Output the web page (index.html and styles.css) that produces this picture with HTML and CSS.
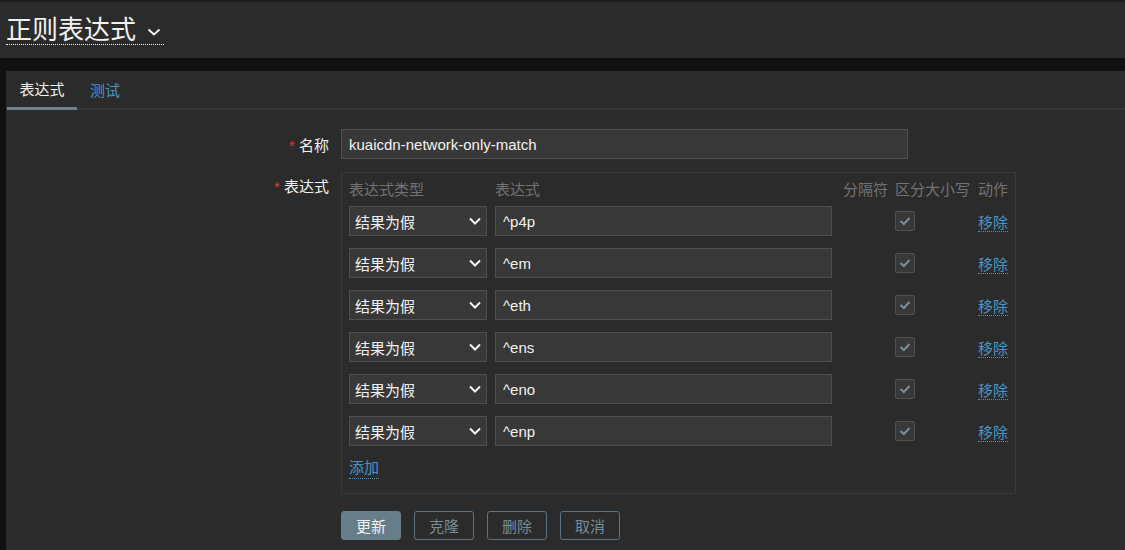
FILE: index.html
```html
<!DOCTYPE html>
<html>
<head lang="zh">
    <meta charset="UTF-8">
    <title>正则表达式</title>
    <link rel="stylesheet" href="styles.css">
</head>
<body>
<div class="header">
    <h1 class="title">正则表达式 <svg class="title-arrow" width="14" height="10" viewBox="0 0 14 10"><path d="M1.5 2.5 L7 7.5 L12.5 2.5" fill="none" stroke="#f2f2f2" stroke-width="2"/></svg></h1>
</div>
<div class="wrapper">
    <ul class="tabs">
        <li class="active"><a href="#">表达式</a></li>
        <li><a href="#">测试</a></li>
    </ul>
    <div class="form">
        <div class="form-row">
            <label class="form-label"><span class="req">*</span> 名称</label>
            <div class="form-field">
                <input class="text-input name-input" type="text" value="kuaicdn-network-only-match">
            </div>
        </div>
        <div class="form-row">
            <label class="form-label label-top"><span class="req">*</span> 表达式</label>
            <div class="form-field">
                <div class="expr-box">
                    <div class="expr-grid" id="exprs">
                        <div class="th">表达式类型</div>
                        <div class="th">表达式</div>
                        <div class="th">分隔符</div>
                        <div class="th">区分大小写</div>
                        <div class="th">动作</div>
                    </div>
                    <a href="#" class="link add-link">添加</a>
                </div>
            </div>
        </div>
        <div class="buttons">
            <button class="btn btn-main">更新</button>
            <button class="btn btn-alt">克隆</button>
            <button class="btn btn-alt">删除</button>
            <button class="btn btn-alt">取消</button>
        </div>
    </div>
</div>
<script>
    //表达式列表
    var exprs = ["^p4p", "^em", "^eth", "^ens", "^eno", "^enp"];
    var grid = document.getElementById("exprs");
    for (var i = 0; i < exprs.length; i++) {
        grid.insertAdjacentHTML("beforeend",
            '<div class="select">结果为假<svg width="14" height="10" viewBox="0 0 14 10"><path d="M2 2.5 L7 7.5 L12 2.5" fill="none" stroke="#f2f2f2" stroke-width="2"/></svg></div>' +
            '<input class="text-input" type="text" value="' + exprs[i] + '">' +
            '<div></div>' +
            '<div><span class="checkbox"><svg width="12" height="10" viewBox="0 0 12 10"><path d="M1.5 5 L4.8 8 L10.5 2" fill="none" stroke="#7b8f9c" stroke-width="2"/></svg></span></div>' +
            '<div><a href="#" class="link">移除</a></div>');
    }
</script>
</body>
</html>
```

FILE: styles.css
```css
* {
    margin: 0;
    padding: 0;
    box-sizing: border-box;
}

ul {
    list-style: none;
}

body {
    background-color: #0e1012;
    color: #f2f2f2;
    font-family: "Liberation Sans", Arial, "Noto Sans CJK SC", sans-serif;
    font-size: 15px;
    width: 1125px;
    height: 550px;
    overflow: hidden;
}

.header {
    height: 58px;
    background-color: #2b2b2b;
    border-top: 2px solid #1c1c1c;
    padding: 14px 0 0 6px;
}

.title {
    display: inline-block;
    font-weight: normal;
    font-size: 26px;
    line-height: 28px;
    border-bottom: 1px dotted #f2f2f2;
    padding-right: 3px;
}

.title-arrow {
    margin-left: 4px;
    vertical-align: 2px;
}

.wrapper {
    margin: 13px 0 0 6px;
    background-color: #2b2b2b;
    height: 500px;
}

.tabs {
    display: flex;
    height: 39px;
    border-bottom: 2px solid #383838;
    padding-left: 1px;
}

.tabs li {
    width: 70px;
    text-align: center;
    line-height: 39px;
}

.tabs li a {
    color: #4796c4;
    text-decoration: none;
}

.tabs li.active {
    border-bottom: 3px solid #6d818f;
    height: 39px;
    line-height: 38px;
}

.tabs li.active a {
    color: #f2f2f2;
}

.tabs li + li {
    width: 56px;
}

.form {
    padding-top: 19px;
}

.form-row {
    display: grid;
    grid-template-columns: 323px 1fr;
    column-gap: 12px;
    margin-bottom: 13px;
    align-items: center;
}

.form-label {
    text-align: right;
}

.label-top {
    align-self: start;
    padding-top: 3px;
}

.req {
    color: #e33734;
}

.text-input {
    height: 30px;
    background-color: #383838;
    border: 1px solid #4f4f4f;
    color: #f2f2f2;
    font: 15px "Liberation Sans", Arial, "Noto Sans CJK SC", sans-serif;
    padding: 0 7px;
    outline: none;
}

.name-input {
    width: 567px;
}

.expr-box {
    width: 675px;
    border: 1px solid #383838;
    padding: 0 7px 14px;
}

.expr-grid {
    display: grid;
    grid-template-columns: 138px 337px 47px 75px 30px;
    column-gap: 8px;
    row-gap: 12px;
    align-items: center;
}

.th {
    color: #737373;
    height: 33px;
    line-height: 33px;
    margin-bottom: -12px;
    white-space: nowrap;
}

.th:nth-child(3) {
    padding-left: 3px;
}

.select {
    height: 30px;
    background-color: #383838;
    border: 1px solid #4f4f4f;
    padding: 0 4px 0 5px;
    display: flex;
    align-items: center;
    justify-content: space-between;
}

.checkbox {
    display: flex;
    width: 20px;
    height: 20px;
    border: 1px solid #505050;
    border-radius: 2px;
    background-color: #383838;
    align-items: center;
    justify-content: center;
}

.link {
    color: #4796c4;
    text-decoration: none;
    border-bottom: 1px dotted #4796c4;
}

.add-link {
    display: inline-block;
    margin-top: 12px;
    line-height: 20px;
}

.buttons {
    display: flex;
    gap: 13px;
    padding: 4px 0 0 335px;
}

.btn {
    width: 60px;
    height: 29px;
    border-radius: 3px;
    font: 15px "Liberation Sans", Arial, "Noto Sans CJK SC", sans-serif;
    border: 1px solid #5e7381;
    cursor: pointer;
}

.btn-main {
    background-color: #687d8a;
    color: #f2f2f2;
    border-color: #687d8a;
}

.btn-alt {
    background-color: transparent;
    color: #768d99;
}
```
